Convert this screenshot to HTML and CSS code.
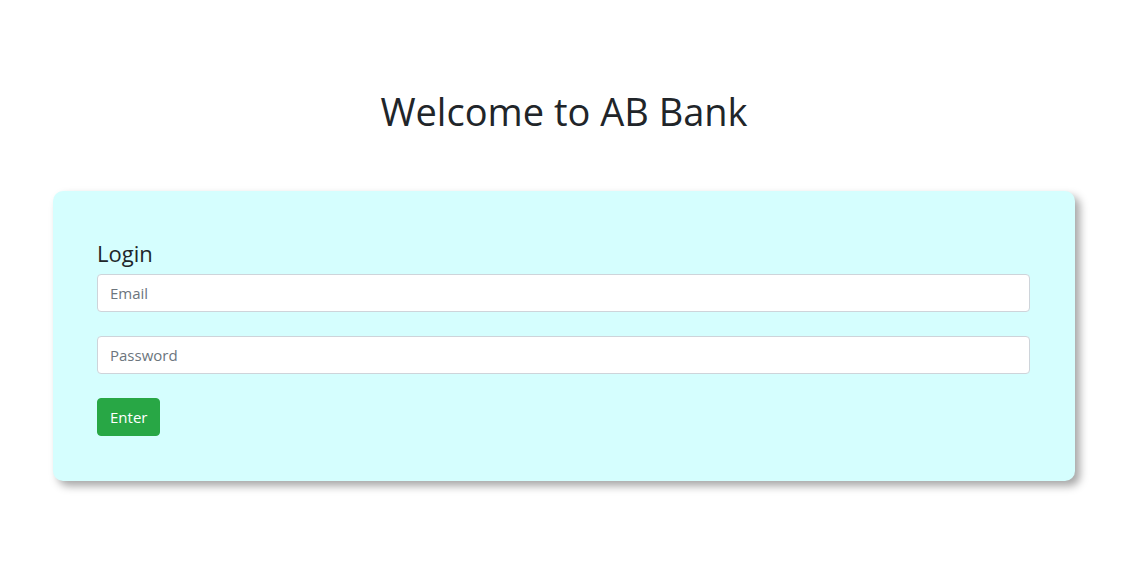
FILE: index.html
```html
<!DOCTYPE html>
<html>
<head>
<meta charset="utf-8">
<link rel="stylesheet" href="styles.css">
</head>
<body>
<div class="page">
  <h1 class="title">Welcome to AB Bank</h1>
  <div class="card">
    <h4 class="card-title">Login</h4>
    <input class="field field-email" type="text" placeholder="Email">
    <input class="field" type="password" placeholder="Password">
    <button class="btn">Enter</button>
  </div>
</div>
</body>
</html>
```
FILE: styles.css
```css
html, body {
  margin: 0;
  padding: 0;
  background: #fff;
}
body {
  font-family: "Open Sans", "Noto Sans", sans-serif;
  color: #212529;
}
.page {
  padding: 87px 61px 90px 53px;
}
.title {
  margin: 0;
  text-align: center;
  font-weight: 400;
  font-size: 38px;
  line-height: 48px;
}
.card {
  margin-top: 56px;
  background: #d5fefe;
  border-radius: 10px;
  box-shadow: 5px 5px 8px rgba(0, 0, 0, 0.35);
  padding: 47px 45px 45px 44px;
  display: flex;
  flex-direction: column;
  align-items: flex-start;
}
.card-title {
  margin: 0 0 6px 0;
  font-weight: 400;
  font-size: 22px;
  line-height: 30px;
}
.field {
  box-sizing: border-box;
  width: 100%;
  height: 38px;
  border: 1px solid #ced4da;
  border-radius: 4px;
  background: #fff;
  padding: 0 12px;
  font-family: inherit;
  font-size: 15px;
  color: #495057;
  margin: 0 0 24px 0;
}
.field::placeholder {
  color: #6c757d;
}
.btn {
  height: 38px;
  padding: 0 12px;
  border: 1px solid #28a745;
  border-radius: 4px;
  background: #28a745;
  color: #fff;
  font-family: inherit;
  font-size: 15px;
}
```
